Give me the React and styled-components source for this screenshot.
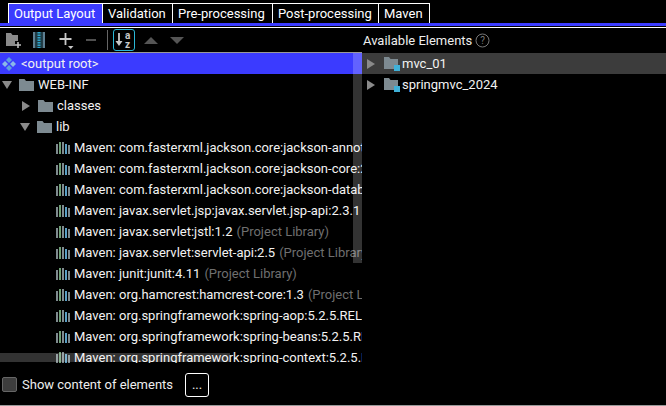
import React from "react";
import styled, { createGlobalStyle } from "styled-components";

const Global = createGlobalStyle`
  html, body { margin: 0; padding: 0; background: #000; }
  body { font-family: Roboto, "Noto Sans", sans-serif; color: #fff; }
`;

const Page = styled.div`
  width: 666px;
  height: 406px;
  display: flex;
  flex-direction: column;
  overflow: hidden;
  background: #000;
`;

const TabBar = styled.div`
  display: flex;
  height: 20px;
  padding: 3px 0 0 8px;
`;

const Tab = styled.div`
  width: ${(p) => p.$w}px;
  box-sizing: border-box;
  height: 20px;
  padding-left: 5px;
  border: 1px solid #fff;
  border-bottom: 0;
  border-left-width: ${(p) => (p.$active ? "1px" : "0")};
  background: ${(p) => (p.$active ? "#3b3bff" : "#000")};
  font-size: 13px;
  line-height: 20px;
  white-space: nowrap;
`;

const TabLine = styled.div`
  height: 3px;
  background: #3b3bff;
  border-bottom: 1px solid #000;
  box-shadow: 0 1px 0 #fff;
  margin-bottom: 1px;
`;

const Split = styled.div`
  flex: 1;
  display: flex;
  min-height: 0;
`;

const LeftPane = styled.div`
  position: relative;
  width: 362px;
  display: flex;
  flex-direction: column;
`;

const RightPane = styled.div`
  flex: 1;
  display: flex;
  flex-direction: column;
`;

const Toolbar = styled.div`
  height: 24px;
  display: flex;
  align-items: center;
  padding-left: 5px;
  border-bottom: 1px solid #9a9a9a;
`;

const ToolIcon = styled.svg`
  display: block;
  flex: none;
  margin-right: ${(p) => p.$gap || 0}px;
`;

const Sep = styled.div`
  width: 1px;
  height: 20px;
  background: #666;
  margin: 0 5px 0 9px;
`;

const SortButton = styled.div`
  width: 20px;
  height: 20px;
  border: 1px solid #2ab7d6;
  border-radius: 3px;
  margin-right: 9px;
  display: flex;
  align-items: center;
  justify-content: center;
`;

const RightHead = styled.div`
  height: 25px;
  display: flex;
  align-items: center;
  gap: 3px;
  padding-left: 1px;
  font-size: 13px;
  color: #eee;
`;

const Tree = styled.div`
  height: 310px;
  overflow: hidden;
`;

const Row = styled.div`
  height: 21px;
  display: flex;
  align-items: center;
  padding-left: ${(p) => p.$indent}px;
  background: ${(p) => p.$bg || "transparent"};
  font-size: 13px;
  white-space: nowrap;
  overflow: hidden;
`;

const Arrow = styled.svg`
  flex: none;
  width: 10px;
  height: 10px;
  margin-right: ${(p) => p.$gap}px;
`;

const Label = styled.span`
  margin-left: ${(p) => p.$gap ?? 4}px;
  color: #f2f2f2;
`;

const Muted = styled.span`
  color: #6f6f6f;
  margin-left: 4px;
`;

const VScroll = styled.div`
  position: absolute;
  left: 353px;
  top: 25px;
  width: 9px;
  height: 210px;
  background: rgba(255, 255, 255, 0.2);
`;

const HScroll = styled.div`
  position: absolute;
  left: 0;
  top: 325px;
  width: 230px;
  height: 9px;
  background: rgba(255, 255, 255, 0.2);
`;

const Footer = styled.div`
  height: 41px;
  display: flex;
  align-items: center;
  padding-left: 2px;
  border-bottom: 1px solid #999;
  font-size: 13px;
  color: #eee;
`;

const Check = styled.div`
  width: 13px;
  height: 13px;
  background: #3d3d3d;
  border: 1px solid #666;
  border-radius: 2px;
  margin-right: 5px;
`;

const DotsButton = styled.div`
  width: 22px;
  height: 22px;
  margin-left: 12px;
  border: 1px solid #fff;
  border-radius: 3px;
  text-align: center;
  line-height: 22px;
`;

const Right = ({ gap = 7 }) => (
  <Arrow $gap={gap} viewBox="0 0 10 10"><path d="M1 0 L9 5 L1 10 Z" fill="#8a8a8a" /></Arrow>
);
const Down = ({ gap = 7 }) => (
  <Arrow $gap={gap} viewBox="0 0 10 10"><path d="M0 1 L10 1 L5 9 Z" fill="#8a8a8a" /></Arrow>
);

const Folder = () => (
  <svg width="15" height="12" viewBox="0 0 15 12" style={{ flex: "none" }}>
    <path d="M0 0 H5.5 L7 2 H15 V12 H0 Z" fill="#7d8a91" />
  </svg>
);

const ModuleFolder = () => (
  <svg width="18" height="16" viewBox="0 0 18 16" style={{ flex: "none" }}>
    <path d="M1 1 H6 L7.5 3 H15 V12 H11 V13 H1 Z" fill="#7d8a91" />
    <rect x="11" y="9" width="6" height="6" fill="#3fb1d9" />
  </svg>
);

const Library = () => (
  <svg width="14" height="12" viewBox="0 0 14 12" style={{ flex: "none" }}>
    <rect x="0" y="2" width="2" height="10" fill="#7f8b8f" />
    <rect x="3" y="0" width="2" height="12" fill="#6f9f76" />
    <rect x="6" y="0" width="2" height="12" fill="#7f8b8f" />
    <rect x="9" y="2" width="2" height="10" fill="#5b9fc4" />
    <rect x="12" y="3" width="2" height="9" fill="#7f8b8f" />
  </svg>
);

const Root = () => (
  <svg width="14" height="14" viewBox="0 0 14 14" style={{ flex: "none" }}>
    <path d="M7 0 L10 3 L7 6 L4 3 Z" fill="#5f9fe0" />
    <path d="M3 4 L6 7 L3 10 L0 7 Z" fill="#8ab8e8" />
    <path d="M11 4 L14 7 L11 10 L8 7 Z" fill="#8ab8e8" />
    <path d="M7 8 L10 11 L7 14 L4 11 Z" fill="#5f9fe0" />
  </svg>
);

const libs = [
  ["Maven: com.fasterxml.jackson.core:jackson-annotations:2.9.0"],
  ["Maven: com.fasterxml.jackson.core:jackson-core:2.9.0"],
  ["Maven: com.fasterxml.jackson.core:jackson-databind:2.9.0"],
  ["Maven: javax.servlet.jsp:javax.servlet.jsp-api:2.3.1", "(Project Library)"],
  ["Maven: javax.servlet:jstl:1.2", "(Project Library)"],
  ["Maven: javax.servlet:servlet-api:2.5", "(Project Library)"],
  ["Maven: junit:junit:4.11", "(Project Library)"],
  ["Maven: org.hamcrest:hamcrest-core:1.3", "(Project Library)"],
  ["Maven: org.springframework:spring-aop:5.2.5.RELEASE"],
  ["Maven: org.springframework:spring-beans:5.2.5.RELEASE"],
  ["Maven: org.springframework:spring-context:5.2.5.RELEASE"],
];

const tabs = [
  ["Output Layout", 95],
  ["Validation", 70],
  ["Pre-processing", 100],
  ["Post-processing", 106],
  ["Maven", 51],
];

export default function App() {
  return (
    <Page>
      <Global />
      <TabBar>
        {tabs.map(([t, w], i) => (
          <Tab key={t} $w={w} $active={i === 0}>{t}</Tab>
        ))}
      </TabBar>
      <TabLine />
      <Split>
        <LeftPane>
          <Toolbar>
            <ToolIcon $gap={12} width="16" height="16" viewBox="0 0 16 16">
              <path d="M1 1 H6 L7.5 3 H13 V9 H10 V14 H1 Z" fill="#8a8a8a" />
              <path d="M13 10 V16 M10 13 H16" stroke="#bbb" strokeWidth="1.6" />
            </ToolIcon>
            <ToolIcon $gap={14} width="12" height="16" viewBox="0 0 12 16">
              <rect x="0" y="0" width="2.5" height="16" fill="#5e7f92" />
              <rect x="9.5" y="0" width="2.5" height="16" fill="#5e7f92" />
              <rect x="2.5" y="0" width="7" height="16" fill="#1c3a44" />
              <path d="M6 0 V16" stroke="#2ea3c9" strokeWidth="3" strokeDasharray="1.5 1" />
            </ToolIcon>
            <ToolIcon $gap={12} width="15" height="18" viewBox="0 0 15 18">
              <path d="M6.5 2 V14 M0.5 8 H12.5" stroke="#c8c8c8" strokeWidth="1.8" />
              <path d="M9 15 H14.5 L11.75 18 Z" fill="#c8c8c8" />
            </ToolIcon>
            <ToolIcon width="12" height="12" viewBox="0 0 12 12">
              <path d="M0 6 H10" stroke="#5a5a5a" strokeWidth="1.8" />
            </ToolIcon>
            <Sep />
            <SortButton>
              <svg width="20" height="18" viewBox="0 0 20 18">
                <path d="M5 2 V12" stroke="#c8c8c8" strokeWidth="1.8" />
                <path d="M1.5 10 H8.5 L5 15 Z" fill="#c8c8c8" />
                <text x="11" y="8" fontSize="10" fontWeight="700" fill="#c8c8c8">a</text>
                <text x="11" y="16.5" fontSize="10" fontWeight="700" fill="#c8c8c8">z</text>
              </svg>
            </SortButton>
            <ToolIcon $gap={12} width="14" height="7" viewBox="0 0 14 7">
              <path d="M0 7 L7 0 L14 7 Z" fill="#555" />
            </ToolIcon>
            <ToolIcon width="14" height="7" viewBox="0 0 14 7">
              <path d="M0 0 L14 0 L7 7 Z" fill="#555" />
            </ToolIcon>
          </Toolbar>
          <Tree>
            <Row $indent={2} $bg="#3b3bff">
              <Root /><Label $gap={5}>&lt;output root&gt;</Label>
            </Row>
            <Row $indent={2}><Down /><Folder /><Label>WEB-INF</Label></Row>
            <Row $indent={21}><Right gap={7} /><Folder /><Label>classes</Label></Row>
            <Row $indent={20}><Down gap={7} /><Folder /><Label>lib</Label></Row>
            {libs.map(([name, note]) => (
              <Row key={name} $indent={56}>
                <Library /><Label>{name}</Label>
                {note && <Muted>{note}</Muted>}
              </Row>
            ))}
          </Tree>
          <VScroll />
          <HScroll />
        </LeftPane>
        <RightPane>
          <RightHead>
            Available Elements
            <svg width="15" height="15" viewBox="0 0 15 15">
              <circle cx="7.5" cy="7.5" r="6.5" fill="none" stroke="#777" />
              <text x="7.5" y="11" fontSize="10" textAnchor="middle" fill="#777">?</text>
            </svg>
          </RightHead>
          <Row $indent={4} $bg="#3c3c3c"><Right gap={7} /><ModuleFolder /><Label $gap={1}>mvc_01</Label></Row>
          <Row $indent={4}><Right gap={7} /><ModuleFolder /><Label $gap={1}>springmvc_2024</Label></Row>
        </RightPane>
      </Split>
      <Footer>
        <Check />
        Show content of elements
        <DotsButton>...</DotsButton>
      </Footer>
    </Page>
  );
}
